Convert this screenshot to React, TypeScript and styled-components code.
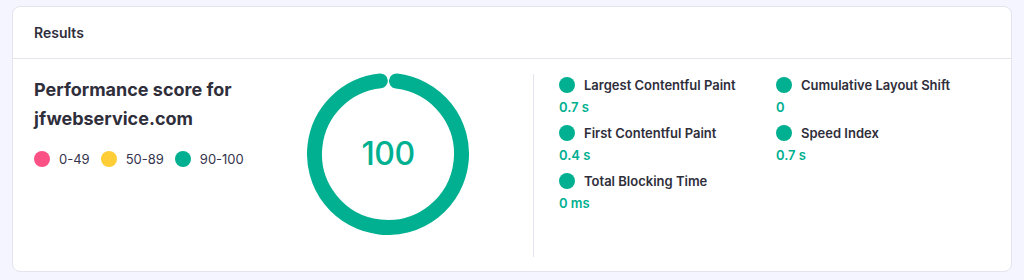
import React from "react";
import styled, {createGlobalStyle} from "styled-components";

const GREEN = "#00b090";

const GlobalStyle = createGlobalStyle`
  html, body {
    margin: 0;
    padding: 0;
    background: #f4f5ff;
    font-family: "Inter", "DejaVu Sans", sans-serif;
    color: #1d1e20;
  }
`;

const Page = styled.div`
  padding: 6px 12px;
`;

const Card = styled.section`
  width: 1000px;
  box-sizing: border-box;
  background: #fff;
  border: 1px solid #e3e4ed;
  border-radius: 8px;
`;

const CardHeader = styled.header`
  height: 51px;
  display: flex;
  align-items: center;
  padding: 0 21px;
  border-bottom: 1px solid #e3e4ed;
  font-size: 14px;
  font-weight: 600;
  color: #2f2e3b;
`;

const CardBody = styled.div`
  display: flex;
  padding: 15px 21px 14px;
`;

const Summary = styled.div`
  width: 273px;
  flex-shrink: 0;
  padding-top: 1px;
`;

const Title = styled.h2`
  margin: 0;
  font-size: 18px;
  line-height: 29px;
  font-weight: 700;
  color: #2f2e3b;
`;

const Legend = styled.div`
  display: flex;
  align-items: center;
  margin-top: 18px;
  gap: 11px;
`;

const LegendItem = styled.span`
  display: flex;
  align-items: center;
  gap: 9px;
  font-size: 13px;
  color: #36344d;
`;

const Dot = styled.span<{ $color: string }>`
  width: 16px;
  height: 16px;
  border-radius: 50%;
  background: ${p => p.$color};
  flex-shrink: 0;
`;

const GaugeWrap = styled.div`
  position: relative;
  width: 162px;
  height: 162px;
  flex-shrink: 0;
  margin-top: -1px;
`;

const GaugeValue = styled.div`
  position: absolute;
  inset: 0;
  display: flex;
  align-items: center;
  justify-content: center;
  padding-bottom: 2px;
  font-size: 32px;
  font-weight: 500;
  color: ${GREEN};
  letter-spacing: -0.5px;
`;

const Divider = styled.div`
  width: 1px;
  height: 183px;
  flex-shrink: 0;
  background: #e3e4ed;
  margin-left: 64px;
  margin-right: 25px;
`;

const Metrics = styled.div`
  flex: 1;
  display: grid;
  grid-template-columns: 217px auto;
  grid-auto-rows: 48px;
  padding-top: 3px;
`;

const Metric = styled.div``;

const MetricHead = styled.div`
  display: flex;
  align-items: center;
  gap: 9px;
  height: 16px;
  font-size: 13px;
  font-weight: 600;
  color: #2f2e3b;
`;

const MetricValue = styled.div`
  margin-top: 6px;
  font-size: 13px;
  font-weight: 600;
  color: ${GREEN};
`;

const Gauge = ({score}: { score: number }) => {
  const r = 73.5;
  const c = 2 * Math.PI * r;
  const arc = (c - 17) * score / 100;
  return (
    <GaugeWrap>
      <svg width="162" height="162" viewBox="0 0 162 162">
        <circle
          cx="81" cy="81" r={r}
          fill="none"
          stroke={GREEN}
          strokeWidth="15"
          strokeLinecap="round"
          strokeDasharray={`${arc} ${c}`}
          transform={`rotate(${-90 + (8.5 / c) * 360} 81 81)`}
        />
      </svg>
      <GaugeValue>{score}</GaugeValue>
    </GaugeWrap>
  );
};

const metrics = [
  {label: "Largest Contentful Paint", value: "0.7 s"},
  {label: "Cumulative Layout Shift", value: "0"},
  {label: "First Contentful Paint", value: "0.4 s"},
  {label: "Speed Index", value: "0.7 s"},
  {label: "Total Blocking Time", value: "0 ms"},
];

const App = () => {
  return (
    <>
      <GlobalStyle/>
      <Page>
        <Card>
          <CardHeader>Results</CardHeader>
          <CardBody>
            <Summary>
              <Title>Performance score for<br/>jfwebservice.com</Title>
              <Legend>
                <LegendItem><Dot $color="#fc5185"/>0-49</LegendItem>
                <LegendItem><Dot $color="#ffcd35"/>50-89</LegendItem>
                <LegendItem><Dot $color={GREEN}/>90-100</LegendItem>
              </Legend>
            </Summary>
            <Gauge score={100}/>
            <Divider/>
            <Metrics>
              {metrics.map(m => (
                <Metric key={m.label}>
                  <MetricHead><Dot $color={GREEN}/>{m.label}</MetricHead>
                  <MetricValue>{m.value}</MetricValue>
                </Metric>
              ))}
            </Metrics>
          </CardBody>
        </Card>
      </Page>
    </>
  );
};

export default App;
